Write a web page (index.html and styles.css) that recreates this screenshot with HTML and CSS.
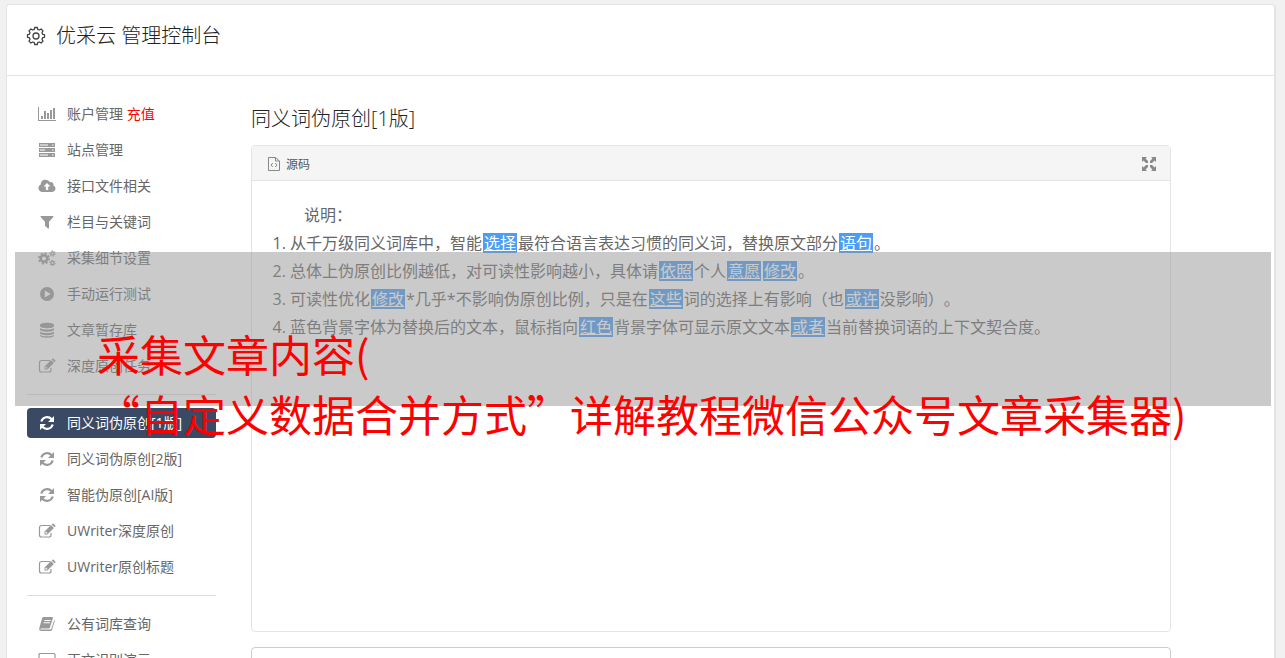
FILE: index.html
```html
<!DOCTYPE html>
<html lang="zh-CN">
<head>
    <meta charset="UTF-8">
    <meta name="viewport" content="width=device-width, initial-scale=1.0">
    <title>优采云 管理控制台</title>
    <link rel="stylesheet" href="styles.css">
</head>
<body>
    <svg class="sprite" width="0" height="0" aria-hidden="true">
        <symbol id="i-chart" viewBox="0 0 18 16"><path d="M0 1h1v13h17v1H0zM3 10h2v3H3zM6 5h2v8H6zM9 7h2v6H9zM12 4h2v9h-2zM15 2h2v11h-2z"/></symbol>
        <symbol id="i-server" viewBox="0 0 18 16"><path fill-rule="evenodd" d="M1 1h16v4H1zM2 2.600h8v.8H2zM14 2.500h1.500v1H14zM1 6h16v4H1zM2 7.600h5v.8H2zM14 7.500h1.500v1H14zM1 11h16v4H1zM2 12.600h8v.8H2zM14 12.500h1.500v1H14z"/></symbol>
        <symbol id="i-cloud" viewBox="0 0 18 16"><path fill-rule="evenodd" d="M4.300 14A4 4 0 0 1 2.700 6.400 5 5 0 0 1 12 4.200a2.600 2.600 0 0 1 3.300 3.400A3.300 3.300 0 0 1 14.300 14zM9 5L5.500 8.500h2.300V12h2.400V8.500h2.300z"/></symbol>
        <symbol id="i-filter" viewBox="0 0 18 16"><path d="M3 2h12q1 .3.400 1L11 7.800V14q-.2.900-1 .5L7.400 12.200 7 11.500V7.800L2.600 3Q2.200 2.200 3 2z"/></symbol>
        <symbol id="i-cogs" viewBox="0 0 18 16"><g fill="none" stroke="currentColor"><circle cx="6" cy="8.500" r="3.300" stroke-width="2.400"/><circle cx="6" cy="8.500" r="5.200" stroke-width="1.600" stroke-dasharray="2.040"/><circle cx="14.500" cy="3.500" r="1.600" stroke-width="1.300"/><circle cx="14.500" cy="3.500" r="2.700" stroke-dasharray="1.410"/><circle cx="14.500" cy="13" r="1.600" stroke-width="1.300"/><circle cx="14.500" cy="13" r="2.700" stroke-dasharray="1.410"/></g></symbol>
        <symbol id="i-play" viewBox="0 0 18 16"><path fill-rule="evenodd" d="M9 1a7 7 0 1 0 0 14A7 7 0 0 0 9 1zM6.800 4.400L12.700 8l-5.900 3.600z"/></symbol>
        <symbol id="i-database" viewBox="0 0 18 16"><path d="M2 3c0-3 14-3 14 0v1c0 3-14 3-14 0zM2 6c2 2 12 2 14 0v1.500c0 3-14 3-14 0zM2 9.500c2 2 12 2 14 0V11c0 3-14 3-14 0zM2 12.800c2 2 12 2 14 0v.7c0 3-14 3-14 0z"/></symbol>
        <symbol id="i-edit" viewBox="0 0 18 16"><path d="M12 2.500H3.500a2 2 0 0 0-2 2v7.500a2 2 0 0 0 2 2H11a2 2 0 0 0 2-2v-2" fill="none" stroke="currentColor" stroke-width="1.200"/><path fill-rule="evenodd" d="M6.500 11.500V8.600L13 2.100l2.900 2.900-6.500 6.500zM7.500 9v1.500H9l.5-.6L8 8.400zM13.700 1.400l.7-.7q.6-.5 1.200 0l1.700 1.700q.5.600 0 1.200l-.7.700z"/></symbol>
        <symbol id="i-refresh" viewBox="0 0 18 16"><path d="M3.300 6.500A6 6 0 0 1 13.600 4.200M14.700 9.500A6 6 0 0 1 4.400 11.800" fill="none" stroke="currentColor" stroke-width="2.200"/><path d="M16 1v6h-6zM2 15V9h6z"/></symbol>
        <symbol id="i-book" viewBox="0 0 18 16"><path fill-rule="evenodd" d="M5.500 1h8.700q1 .1.700 1l-2.900 9.500q-.3 1-1.400 1H3q-.8 0-.5 1h9.400q1.200 0 1.600-1.200L16.200 4q.8.400.5 1.200L14 13.700Q13.600 15 12.300 15H3Q.8 14.800 1.200 12.500L4 2.600Q4.400 1.200 5.500 1zM6.500 4l-.3 1h6.300l.3-1zM5.800 6.300l-.3 1h6.300l.3-1z"/></symbol>
        <symbol id="i-laptop" viewBox="0 0 18 16"><path d="M2 1.500h14a1 1 0 0 1 1 1V11H1V2.500a1 1 0 0 1 1-1z" fill="none" stroke="currentColor" stroke-width="1.200"/><path d="M0 12h18v2H0z"/></symbol>
    </svg>

    <div class="card">
        <header class="card-header">
            <svg class="gear" viewBox="0 0 20 20" aria-hidden="true">
                <path d="M8.300 3.300L8.700 1.500h2.600l.4 1.800 1.800.7 1.600-1 1.900 1.900-1 1.600.7 1.800 1.800.4v2.600l-1.800.4-.7 1.800 1 1.600-1.900 1.900-1.600-1-1.800.7-.4 1.800H8.700l-.4-1.800-1.800-.7-1.600 1L3 15.100l1-1.600-.7-1.800-1.800-.4V8.700l1.800-.4L4 6.500l-1-1.600L4.900 3l1.600 1z"/>
                <circle cx="10" cy="10" r="3"/>
            </svg>
            <h1>优采云 管理控制台</h1>
        </header>

        <div class="content">
            <nav class="sidebar">
                <a href="#"><svg><use href="#i-chart"/></svg><span>账户管理 <em>充值</em></span></a>
                <a href="#"><svg><use href="#i-server"/></svg>站点管理</a>
                <a href="#"><svg><use href="#i-cloud"/></svg>接口文件相关</a>
                <a href="#"><svg><use href="#i-filter"/></svg>栏目与关键词</a>
                <a href="#"><svg><use href="#i-cogs"/></svg>采集细节设置</a>
                <a href="#"><svg><use href="#i-play"/></svg>手动运行测试</a>
                <a href="#"><svg><use href="#i-database"/></svg>文章暂存库</a>
                <a href="#"><svg><use href="#i-edit"/></svg>深度原创任务</a>
                <hr>
                <a href="#" class="active"><svg><use href="#i-refresh"/></svg>同义词伪原创[1版]</a>
                <a href="#"><svg><use href="#i-refresh"/></svg>同义词伪原创[2版]</a>
                <a href="#"><svg><use href="#i-refresh"/></svg>智能伪原创[AI版]</a>
                <a href="#"><svg><use href="#i-edit"/></svg>UWriter深度原创</a>
                <a href="#"><svg><use href="#i-edit"/></svg>UWriter原创标题</a>
                <hr>
                <a href="#"><svg><use href="#i-book"/></svg>公有词库查询</a>
                <a href="#"><svg><use href="#i-laptop"/></svg>正文识别演示</a>
            </nav>

            <main class="main">
                <h2>同义词伪原创[1版]</h2>
                <section class="editor">
                    <div class="toolbar">
                        <button type="button">
                            <svg width="12" height="14" viewBox="0 0 12 14" fill="none" stroke="#888" aria-hidden="true"><path d="M.5.5h7l4 3.500v9.500H.5z" /><path d="M7.500.5V4h4M4.800 6L3 8l1.800 2M7.200 6L9 8l-1.800 2" /></svg>
                            源码
                        </button>
                        <button type="button" aria-label="全屏">
                            <svg width="14" height="14" viewBox="0 0 14 14" fill="#888" aria-hidden="true"><path d="M0 0h5L3.500 1.500 6 4v2H4L1.500 3.500 0 5zM14 0v5l-1.500-1.500L10 6H8V4l2.500-2.500L9 0zM0 14V9l1.500 1.500L4 8h2v2l-2.500 2.500L5 14zM14 14H9l1.500-1.500L8 10V8h2l2.500 2.500L14 9z"/></svg>
                        </button>
                    </div>
                    <div class="text">
                        <p>说明：</p>
                        <ol>
                            <li>从千万级同义词库中，智能<u>选择</u>最符合语言表达习惯的同义词，替换原文部分<u>语句</u>。</li>
                            <li>总体上伪原创比例越低，对可读性影响越小，具体请<u>依照</u>个人<u>意愿</u><u>修改</u>。</li>
                            <li>可读性优化<u>修改</u>*几乎*不影响伪原创比例，只是在<u>这些</u>词的选择上有影响（也<u>或许</u>没影响）。</li>
                            <li>蓝色背景字体为替换后的文本，鼠标指向<u>红色</u>背景字体可显示原文文本<u>或者</u>当前替换词语的上下文契合度。</li>
                        </ol>
                    </div>
                </section>
                <section class="next-box"></section>
            </main>
        </div>
    </div>

    <div class="banner">
        <p>采集文章内容(<br>“自定义数据合并方式”详解教程微信公众号文章采集器)</p>
    </div>
</body>
</html>
```
FILE: styles.css
```css
* {
    box-sizing: border-box;
}

body {
    position: relative;
    height: 100vh;
    margin: 0;
    overflow: hidden;
    background-color: #f1f1f1;
    color: #666;
    font-family: "Open Sans", "Noto Sans CJK SC", sans-serif;
    font-size: 14px;
    text-spacing-trim: space-all;
}

h1, h2 {
    margin: 0;
    color: #222;
    font-size: 20px;
    font-weight: 300;
    line-height: 30px;
}

.sprite {
    position: absolute;
}

.card {
    margin: 4px 9px 0 6px;
    border: 1px solid #e4e4e4;
    border-right-width: 2px;
    border-radius: 4px;
    background-color: #fff;
}

.card-header {
    display: flex;
    align-items: center;
    gap: 10px;
    height: 71px;
    padding: 0 19px 8px;
    border-bottom: 1px solid #e4e4e4;
}

.gear {
    width: 20px;
    height: 20px;
    fill: none;
    stroke: #444;
    stroke-linejoin: round;
    stroke-width: 1.3;
}

.content {
    display: flex;
    gap: 35px;
    padding: 23px 103px 0 20px;
}

/* Sidebar */
.sidebar {
    display: flex;
    flex: 0 0 189px;
    flex-direction: column;
    gap: 6px;
}

.sidebar a {
    display: flex;
    align-items: center;
    gap: 11px;
    height: 30px;
    padding: 0 11px;
    border-radius: 4px;
    color: #666;
    line-height: 30px;
    text-decoration: none;
    white-space: nowrap;
}

.sidebar svg {
    flex: none;
    width: 18px;
    height: 16px;
    color: #999;
    fill: currentColor;
}

.sidebar em {
    color: #f00;
    font-style: normal;
}

.sidebar .active,
.sidebar .active svg {
    color: #fff;
}

.sidebar .active {
    background-color: #3a4964;
}

.sidebar hr {
    width: 100%;
    margin: 7px 0;
    border: 0;
    border-top: 1px solid #ddd;
}

/* Editor */
.main {
    flex: 1;
    min-width: 0;
}

.main h2 {
    margin: 5px 0 11px;
}

.editor {
    min-height: 487px;
    border: 1px solid #e4e4e4;
    border-radius: 4px;
}

.toolbar {
    display: flex;
    align-items: center;
    justify-content: space-between;
    height: 35px;
    padding: 2px 14px 0 16px;
    border-bottom: 1px solid #e4e4e4;
    background-color: #f5f5f5;
}

.toolbar button {
    display: flex;
    align-items: center;
    gap: 6px;
    padding: 0;
    border: 0;
    background: none;
    color: #555;
    font-family: inherit;
    font-size: 12px;
}

.text {
    padding: 20px;
    font-size: 16px;
    line-height: 28px;
}

.text p {
    margin: 0;
    text-indent: 2em;
}

.text ol {
    margin: 0;
    padding-left: 18px;
}

.text u {
    display: inline-block;
    margin: 0 1px;
    padding: 0 1px;
    background-color: #4a9ef5;
    color: #fff;
    line-height: 20px;
}

.next-box {
    height: 100px;
    margin-top: 15px;
    border: 1px solid #ccc;
    border-radius: 4px;
}

/* Title strip lying over the page */
.banner {
    position: absolute;
    top: 252px;
    right: 14px;
    left: 15px;
    height: 154px;
    padding: 71px 0 0 82px;
    background-color: rgba(150, 150, 150, 0.5);
}

.banner p {
    margin: 0;
    color: #f00;
    font-family: "Noto Sans CJK SC", sans-serif;
    font-size: 43px;
    line-height: 60px;
    white-space: nowrap;
}
```
